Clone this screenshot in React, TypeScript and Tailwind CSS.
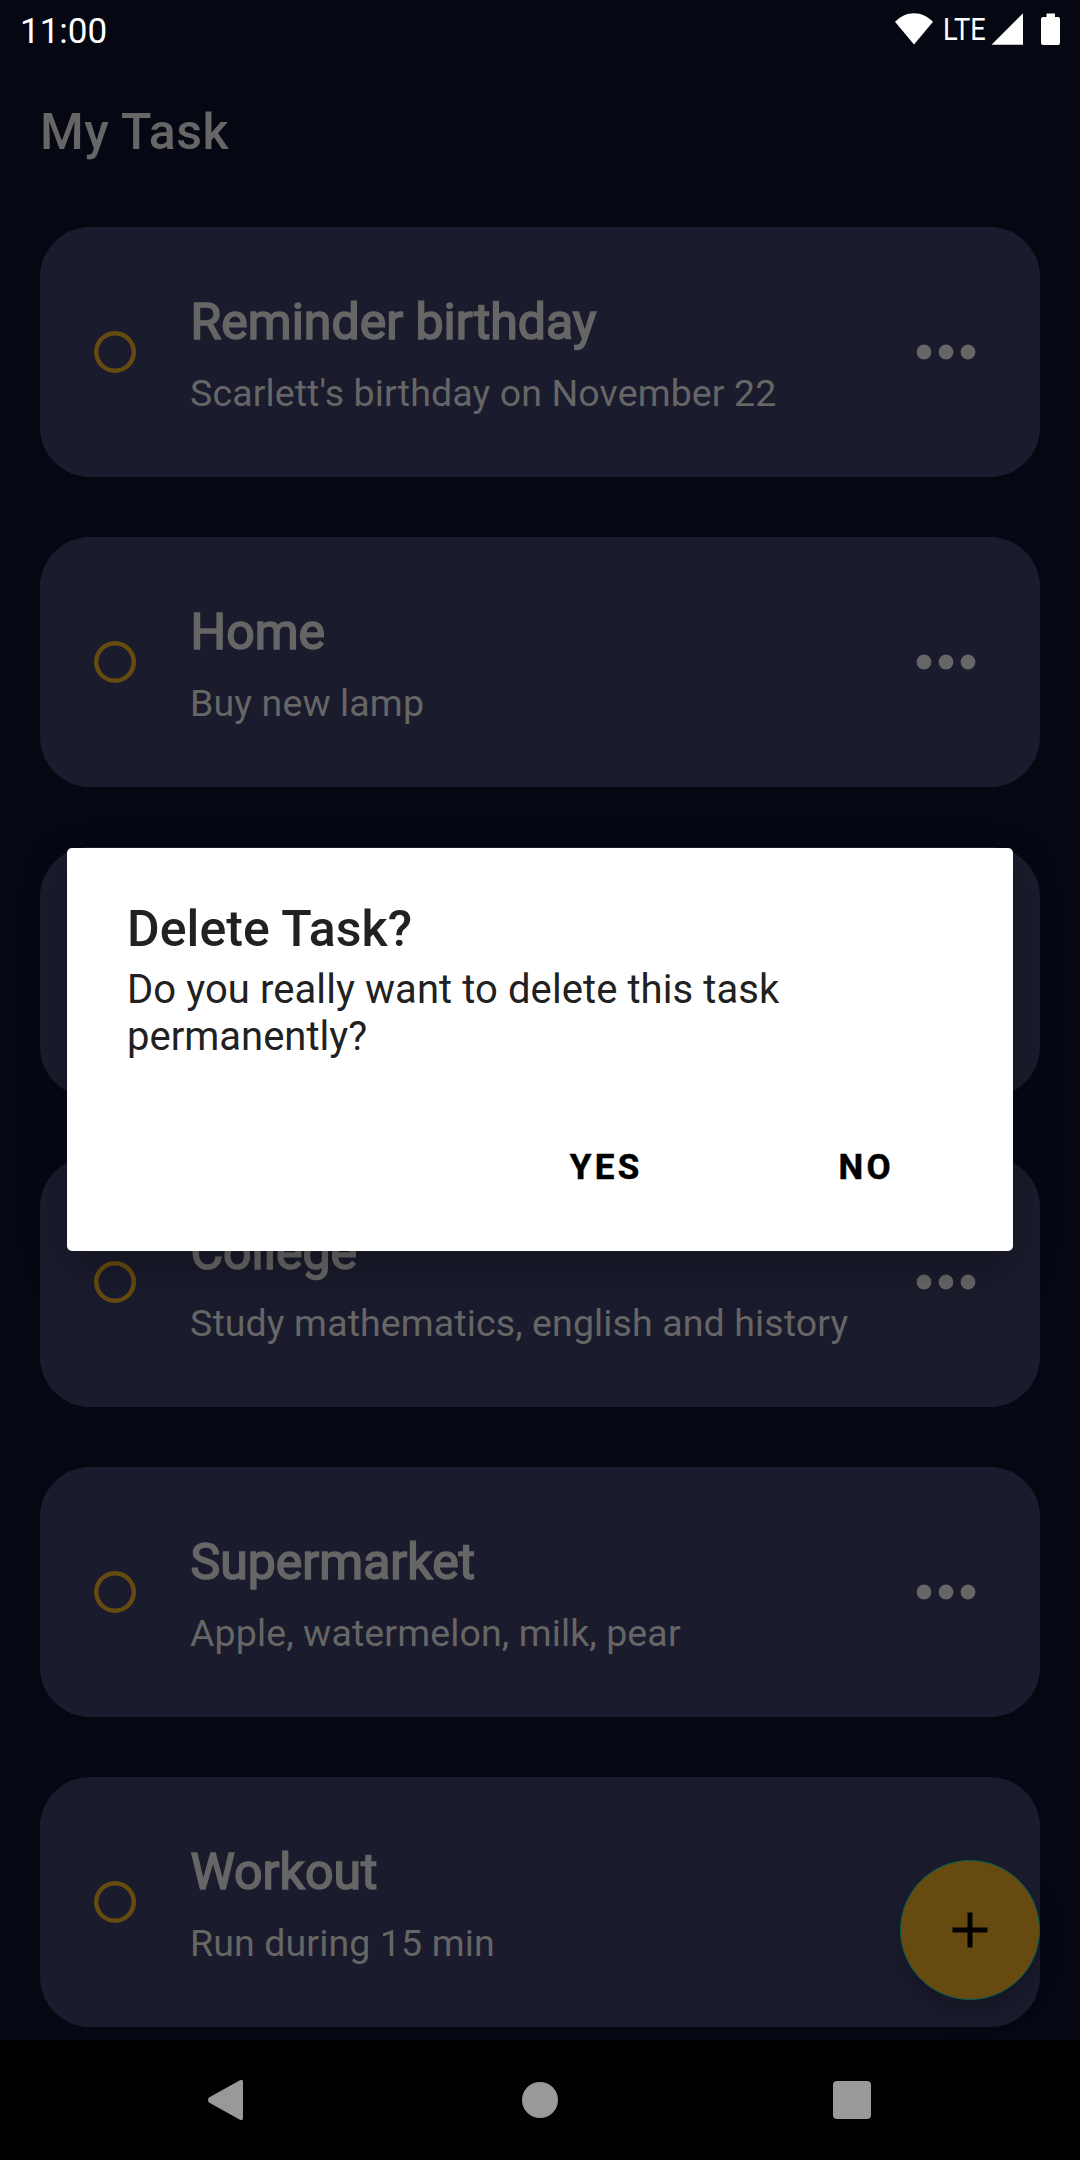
type Task = { id: number; title?: string; note?: string };

const tasks: Task[] = [
  { id: 1, title: 'Reminder birthday', note: "Scarlett's birthday on November 22" },
  { id: 2, title: 'Home', note: 'Buy new lamp' },
  { id: 3 },
  { id: 4, title: 'College', note: 'Study mathematics, english and history' },
  { id: 5, title: 'Supermarket', note: 'Apple, watermelon, milk, pear' },
  { id: 6, title: 'Workout', note: 'Run during 15 min' },
];

function StatusBar() {
  return (
    <header className="flex h-[60px] shrink-0 items-start justify-between pl-5 pr-5 text-white">
      <span className="mt-[11px] text-[35px] leading-[42px]">11:00</span>
      <div className="flex">
        <svg className="h-[60px] w-[38px]" viewBox="895 0 38 60" fill="currentColor">
          <path d="M914 44.6 895 21.8C900.4 16.4 906.7 13.2 914 13.2S927.600 16.400 933 21.800Z" />
        </svg>
        <span className="ml-[10px] mt-[10px] w-[48px] origin-left scale-x-[0.850] text-[32px] leading-[38px]">LTE</span>
        <svg className="h-[60px] w-[69px]" viewBox="991 0 69 60" fill="currentColor">
          <path d="M1023 13.300V44.700H991.500Z" />
          <path d="M1046.500 13.500h8.500v3.500h3a2 2 0 0 1 2 2v24a2 2 0 0 1-2 2h-15a2 2 0 0 1-2-2V19a2 2 0 0 1 2-2h3.500Z" />
        </svg>
      </div>
    </header>
  );
}

function TaskCard({ task }: { task: Task }) {
  return (
    <li className="flex h-[250px] items-center rounded-[50px] bg-[#1a1b2c] pl-[54px] pr-[64px]">
      <svg className="size-[42px] shrink-0" viewBox="0 0 42 42" fill="none" stroke="#664a10" strokeWidth="4.500">
        <circle cx="21" cy="21" r="18.750" />
      </svg>
      <div className="ml-[54px] h-full flex-1 pt-[66px]">
        <h2 className="pl-[0.500px] text-[50px] leading-[58px] [-webkit-text-stroke:1.700px_#666666]">{task.title}</h2>
        <p className="mt-5 text-[37.500px] leading-[44px] tracking-[0.120px]">{task.note}</p>
      </div>
      <svg className="h-4 w-[60px] shrink-0" viewBox="0 0 60 16" fill="#666666">
        <circle cx="8" cy="8" r="7.400" />
        <circle cx="30" cy="8" r="7.400" />
        <circle cx="52" cy="8" r="7.400" />
      </svg>
    </li>
  );
}

function DeleteDialog() {
  return (
    <div className="absolute inset-x-0 top-[848px] flex justify-center">
      <section
        role="dialog"
        className="h-[403px] w-[946px] rounded-[5px] bg-white px-[60px] pt-[52px] text-[#212121] shadow-[0_18px_44px_rgba(0,0,0,0.24)]"
      >
        <h2 className="text-[50px] font-medium leading-[58px] tracking-[0.100px]">Delete Task?</h2>
        <p className="mt-2 text-[40px] leading-[47px]">
          <span className="tracking-[0.080px]">Do you really want to delete this task</span>
          <br />
          <span>permanently?</span>
        </p>
        <div className="mt-[87px] flex justify-end gap-[196px] pr-[59px] text-[35px] font-bold leading-[42px] tracking-[3.300px] text-black [-webkit-text-stroke:0.500px_#000000]">
          <button type="button">YES</button>
          <button type="button">NO</button>
        </div>
      </section>
    </div>
  );
}

function NavigationBar() {
  return (
    <nav className="mt-auto flex h-[120px] shrink-0 items-center bg-black pl-[206px] text-[#999999]">
      <svg className="h-11 w-10" viewBox="0 0 40 44" fill="currentColor">
        <path d="M3 19.500 33.500 2.400Q37 0.800 37 4V40Q37 43.200 33.500 41.600L3 24.500Q1 22 3 19.500Z" />
      </svg>
      <span className="ml-[276px] size-9 rounded-full bg-current" />
      <span className="ml-[275px] size-[38px] rounded-[4px] bg-current" />
    </nav>
  );
}

export default function App() {
  return (
    <div className="relative flex h-[2160px] w-[1080px] flex-col overflow-hidden bg-[#050713] font-['Roboto',sans-serif] text-[#666666]">
      <StatusBar />
      <h1 className="ml-10 mt-[43px] text-[50px] font-medium leading-[58px] tracking-[0.500px]">My Task</h1>
      <ul className="mx-10 mt-[66px] flex flex-col gap-[60px]">
        {tasks.map((task) => (
          <TaskCard key={task.id} task={task} />
        ))}
      </ul>
      <NavigationBar />
      <button
        type="button"
        aria-label="Add task"
        className="absolute bottom-[160px] right-10 flex size-[140px] items-center justify-center rounded-full border border-[#015f57] bg-[#664a10] shadow-[0_12px_24px_rgba(0,0,0,0.200)]"
      >
        <svg className="size-[60px]" viewBox="0 0 24 24" fill="#000000">
          <path d="M19 13h-6v6h-2v-6H5v-2h6V5h2v6h6z" />
        </svg>
      </button>
      <DeleteDialog />
    </div>
  );
}
